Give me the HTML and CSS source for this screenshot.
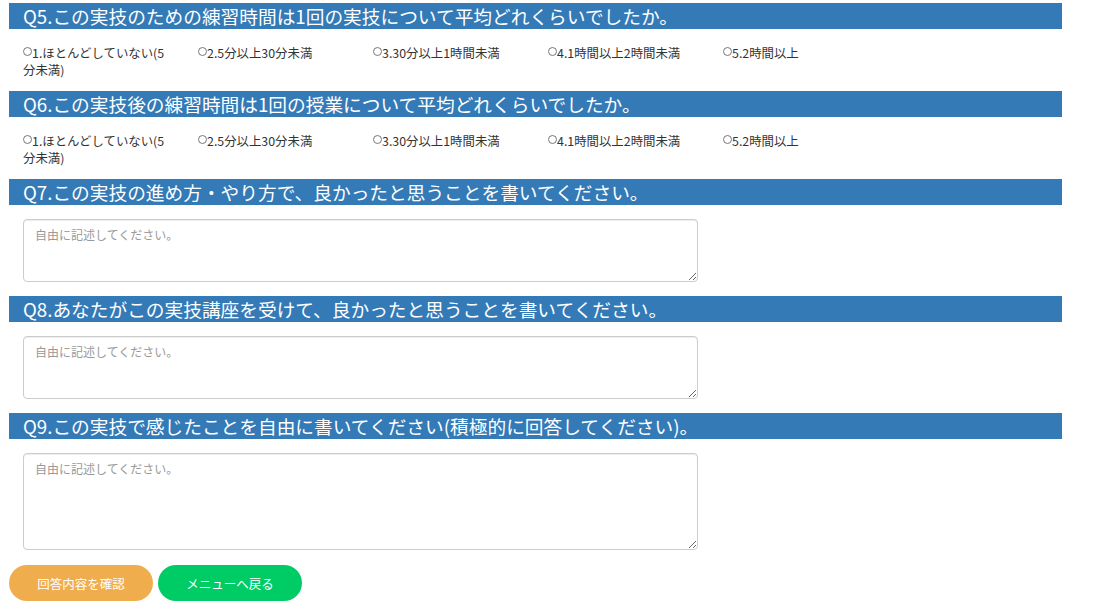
FILE: index.html
```html
<!DOCTYPE html>
<html lang="ja">
<head>
  <meta charset="UTF-8">
  <title>アンケート</title>
  <link rel="stylesheet" href="styles.css">
</head>
<body>
  <form class="enquete">
    <h2 class="q-title">Q5.この実技のための練習時間は1回の実技について平均どれくらいでしたか。</h2>
    <ul class="choices">
      <li><label><input type="radio" name="q5">1.ほとんどしていない(5分未満)</label></li>
      <li><label><input type="radio" name="q5">2.5分以上30分未満</label></li>
      <li><label><input type="radio" name="q5">3.30分以上1時間未満</label></li>
      <li><label><input type="radio" name="q5">4.1時間以上2時間未満</label></li>
      <li><label><input type="radio" name="q5">5.2時間以上</label></li>
    </ul>

    <h2 class="q-title">Q6.この実技後の練習時間は1回の授業について平均どれくらいでしたか。</h2>
    <ul class="choices">
      <li><label><input type="radio" name="q6">1.ほとんどしていない(5分未満)</label></li>
      <li><label><input type="radio" name="q6">2.5分以上30分未満</label></li>
      <li><label><input type="radio" name="q6">3.30分以上1時間未満</label></li>
      <li><label><input type="radio" name="q6">4.1時間以上2時間未満</label></li>
      <li><label><input type="radio" name="q6">5.2時間以上</label></li>
    </ul>

    <h2 class="q-title">Q7.この実技の進め方・やり方で、良かったと思うことを書いてください。</h2>
    <div class="answer">
      <textarea class="free-text" placeholder="自由に記述してください。"></textarea>
    </div>

    <h2 class="q-title">Q8.あなたがこの実技講座を受けて、良かったと思うことを書いてください。</h2>
    <div class="answer">
      <textarea class="free-text" placeholder="自由に記述してください。"></textarea>
    </div>

    <h2 class="q-title">Q9.この実技で感じたことを自由に書いてください(積極的に回答してください)。</h2>
    <div class="answer">
      <textarea class="free-text free-text-lg" placeholder="自由に記述してください。"></textarea>
    </div>

    <div class="buttons">
      <button type="button" class="btn btn-confirm">回答内容を確認</button>
      <button type="button" class="btn btn-menu">メニューへ戻る</button>
    </div>
  </form>
</body>
</html>
```

FILE: styles.css
```css
body {
  margin: 3px 0 0;
  font-family: "Noto Sans CJK JP", "Noto Sans", sans-serif;
  color: #333;
  background: #fff;
}
.enquete {
  width: 1053px;
  padding-left: 9px;
}

/* 設問タイトル */
.q-title {
  margin: 0;
  height: 26px;
  line-height: 26px;
  padding-left: 14px;
  background-color: #337ab7;
  color: #fff;
  font-size: 18.7px;
  font-weight: normal;
  white-space: nowrap;
  overflow: hidden;
}

/* 選択肢 */
.choices {
  list-style: none;
  margin: 0;
  padding: 16px 0 12px 14px;
  display: flex;
  font-size: 12.4px;
  line-height: 17px;
}
.choices > li {
  width: 175px;
  flex: none;
}
.choices label {
  display: block;
  width: 150px;
}
.choices input[type="radio"] {
  -webkit-appearance: none;
  appearance: none;
  width: 9px;
  height: 9px;
  margin: 2px 0 0;
  border: 1px solid #777;
  border-radius: 50%;
  vertical-align: top;
  background: #fff;
}

/* 自由記述 */
.answer {
  padding: 14px 0 14px 14px;
  line-height: 0;
}
.free-text {
  box-sizing: border-box;
  width: 675px;
  height: 63px;
  margin: 0;
  padding: 6px 11px;
  border: 1px solid #ccc;
  border-radius: 4px;
  font-family: inherit;
  font-size: 12px;
  line-height: 17px;
  color: #555;
  box-shadow: inset 0 1px 1px rgba(0, 0, 0, .075);
}
.free-text::placeholder {
  color: #999;
}
.free-text-lg {
  height: 97px;
}

/* ボタン */
.buttons {
  display: flex;
  gap: 5px;
  padding-top: 1px;
}
.btn {
  width: 144px;
  height: 36px;
  border: none;
  border-radius: 18px;
  color: #fff;
  font-family: inherit;
  font-size: 12.5px;
  cursor: pointer;
}
.btn-confirm {
  background-color: #f0ad4e;
}
.btn-menu {
  background-color: #00cc66;
}
```
